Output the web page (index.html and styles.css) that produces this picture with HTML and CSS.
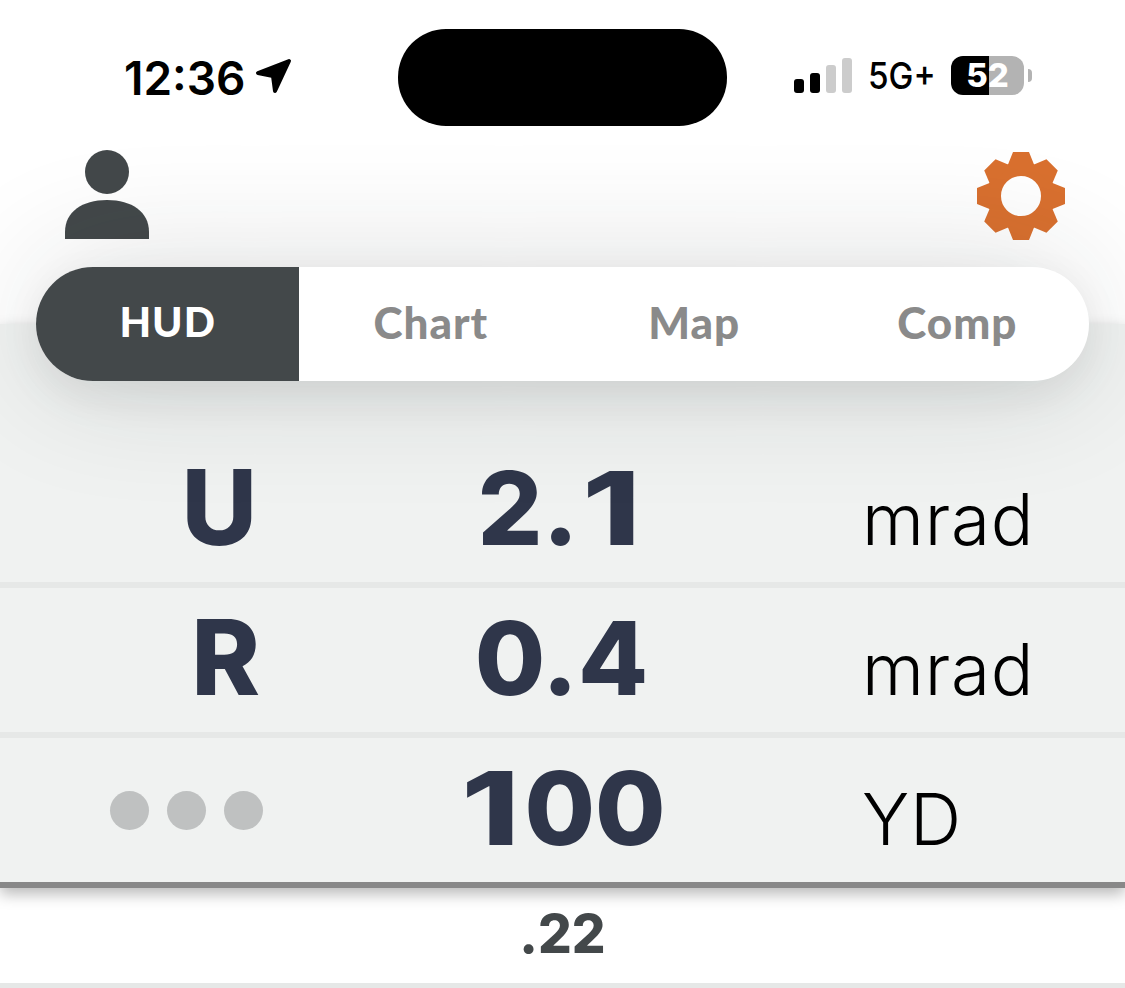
FILE: index.html
```html
<!DOCTYPE html>
<html lang="en">
<head>
    <meta charset="UTF-8">
    <meta name="viewport" content="width=device-width, initial-scale=1.0">
    <title>HUD</title>
    <link rel="stylesheet" href="styles.css">
</head>
<body>
    <header class="top">
        <div class="status-bar">
            <div class="status-left">
                <span class="time">12:36</span>
                <svg class="arrow" viewBox="0 0 38 38"><path d="M34 4 L3 16 L18 19 L20 34 Z"/></svg>
            </div>
            <div class="island"></div>
            <div class="status-right">
                <div class="signal">
                    <span class="bar bar-1"></span>
                    <span class="bar bar-2"></span>
                    <span class="bar bar-3"></span>
                    <span class="bar bar-4"></span>
                </div>
                <span class="network">5G+</span>
                <div class="battery">52</div>
                <span class="battery-cap"></span>
            </div>
        </div>
        <div class="tool-row">
            <svg class="person" viewBox="0 0 84 90"><circle cx="42" cy="22" r="22"/><path d="M0 89 V82 C0 62 17 50 42 50 C67 50 84 62 84 82 V89 Z"/></svg>
            <svg class="gear" viewBox="-45 -45 90 90">
                <circle r="27" fill="none" stroke="#d9702f" stroke-width="14"/>
                <g fill="#d9702f">
                    <polygon points="-8,-44 8,-44 14,-29 -14,-29"/>
                    <polygon points="-8,-44 8,-44 14,-29 -14,-29" transform="rotate(45)"/>
                    <polygon points="-8,-44 8,-44 14,-29 -14,-29" transform="rotate(90)"/>
                    <polygon points="-8,-44 8,-44 14,-29 -14,-29" transform="rotate(135)"/>
                    <polygon points="-8,-44 8,-44 14,-29 -14,-29" transform="rotate(180)"/>
                    <polygon points="-8,-44 8,-44 14,-29 -14,-29" transform="rotate(225)"/>
                    <polygon points="-8,-44 8,-44 14,-29 -14,-29" transform="rotate(270)"/>
                    <polygon points="-8,-44 8,-44 14,-29 -14,-29" transform="rotate(315)"/>
                </g>
            </svg>
        </div>
        <nav class="tabs">
            <a class="tab active" href="#">HUD</a>
            <a class="tab" href="#">Chart</a>
            <a class="tab" href="#">Map</a>
            <a class="tab" href="#">Comp</a>
        </nav>
    </header>
    <main class="panel">
        <div class="row row-first">
            <span class="label label-u">U</span>
            <span class="value">2.<span class="one">1</span></span>
            <span class="unit">mrad</span>
        </div>
        <div class="row">
            <span class="label">R</span>
            <span class="value">0.4</span>
            <span class="unit">mrad</span>
        </div>
        <div class="row row-last">
            <span class="dots"><i></i><i></i><i></i></span>
            <span class="value"><span class="one">1</span>00</span>
            <span class="unit">YD</span>
        </div>
    </main>
    <footer class="caliber">.22</footer>
</body>
</html>
```

FILE: styles.css
```css
/* styles.css */
html, body {
    margin: 0;
    padding: 0;
}

body {
    width: 1125px;
    height: 988px;
    overflow: hidden;
    background-color: #fff;
    font-family: "Lato", "Liberation Sans", sans-serif;
}

.top {
    height: 324px;
}

.status-bar {
    display: flex;
    align-items: flex-start;
    height: 126px;
    padding-top: 29px;
    box-sizing: border-box;
}

.status-left {
    display: flex;
    align-items: center;
    flex: none;
    width: 398px;
    height: 97px;
    padding-left: 124px;
    box-sizing: border-box;
}

.time {
    font-family: "Inter", sans-serif;
    font-size: 46px;
    font-weight: 600;
    line-height: 92px;
    color: #000;
}

.arrow {
    width: 38px;
    height: 38px;
    margin: 0 0 3px 10px;
    fill: #000;
    stroke: #000;
    stroke-width: 4;
    stroke-linejoin: round;
}

.island {
    flex: none;
    width: 329px;
    height: 97px;
    margin-right: 67px;
    border-radius: 48px;
    background-color: #000;
}

.status-right {
    display: flex;
    align-items: flex-end;
    height: 66px;
}

.signal {
    display: flex;
    align-items: flex-end;
    gap: 6px;
    height: 35px;
    margin-bottom: 2px;
}

.bar {
    display: block;
    width: 10px;
    border-radius: 3px;
    background-color: #ccc;
}

.bar-1 {
    height: 14px;
    background-color: #000;
}

.bar-2 {
    height: 20px;
    background-color: #000;
}

.bar-3 {
    height: 28px;
}

.bar-4 {
    height: 35px;
}

.network {
    width: 65px;
    margin: 0 0 1px 16px;
    font-family: "Inter", sans-serif;
    font-size: 37px;
    font-weight: 500;
    line-height: 36px;
    color: #000;
    transform: scaleX(.9);
    transform-origin: left center;
    white-space: nowrap;
}

.battery {
    width: 73px;
    height: 39px;
    margin-left: 18px;
    border-radius: 12px;
    background: linear-gradient(to right, #000 52%, #b3b3b3 52%);
    color: #fff;
    font-family: "Inter", sans-serif;
    font-size: 33px;
    font-weight: 800;
    line-height: 39px;
    text-align: center;
}

.battery-cap {
    width: 4px;
    height: 13px;
    margin: 0 0 13px 4px;
    border-radius: 0 7px 7px 0;
    background-color: #b3b3b3;
}

.tool-row {
    display: flex;
    justify-content: space-between;
    align-items: flex-start;
    padding: 24px 59px 0 65px;
}

.person {
    width: 84px;
    height: 90px;
    fill: #43484a;
}

.gear {
    width: 90px;
    height: 90px;
    margin-top: 1px;
}

.tabs {
    position: relative;
    z-index: 2;
    display: flex;
    width: 1053px;
    height: 114px;
    margin: 26px 0 0 36px;
    border-radius: 57px;
    background-color: #fff;
    box-shadow: 0 0 130px rgba(30, 35, 35, .16), 0 14px 40px rgba(30, 35, 35, .08);
}

.tab {
    flex: 1;
    font-size: 44px;
    font-weight: 900;
    line-height: 110px;
    letter-spacing: 1px;
    text-align: center;
    text-decoration: none;
    color: #8a8a8a;
}

.tab.active {
    border-radius: 57px 0 0 57px;
    background-color: #43484a;
    font-size: 41px;
    color: #fff;
}

.panel {
    position: relative;
    z-index: 1;
    height: 564px;
    box-sizing: border-box;
    border-bottom: 6px solid #888;
    background-color: #f0f2f1;
    box-shadow: 0 6px 14px rgba(0, 0, 0, .28);
}

.row {
    position: relative;
    z-index: 3;
    display: grid;
    grid-template-columns: 263px 597px 265px;
    align-items: baseline;
    height: 150px;
    box-sizing: border-box;
    border-bottom: 6px solid #e6e8e7;
    padding-top: 14px;
}

.row-first {
    height: 264px;
    padding-top: 128px;
}

.row-last {
    height: 144px;
    padding-top: 15px;
    border-bottom: 0;
}

.label,
.value {
    font-family: "Inter", sans-serif;
    font-size: 102px;
    font-weight: 800;
    line-height: 110px;
    color: #2f364a;
}

.label {
    padding-right: 3px;
    font-size: 104px;
    text-align: right;
}

.label-u {
    padding-right: 6px;
}

.value {
    text-align: center;
}

/* the reference font has a much wider 1 */
.one {
    display: inline-block;
    margin: 0 11px;
    transform: scaleX(1.3);
}

.unit {
    padding-left: 2px;
    font-family: "Inter", sans-serif;
    font-size: 71px;
    font-weight: 300;
    line-height: 110px;
    letter-spacing: .75px;
    color: #000;
}

.dots {
    display: flex;
    justify-content: flex-end;
    gap: 18px;
    align-self: center;
    margin-top: -15px;
}

.dots i {
    display: block;
    width: 39px;
    height: 39px;
    border-radius: 50%;
    background-color: #bfc1c1;
}

.caliber {
    height: 100px;
    box-sizing: border-box;
    border-bottom: 5px solid #e6e8e7;
    font-family: "Inter", sans-serif;
    font-size: 53px;
    font-weight: 800;
    line-height: 92px;
    text-align: center;
    color: #43484a;
}
```
